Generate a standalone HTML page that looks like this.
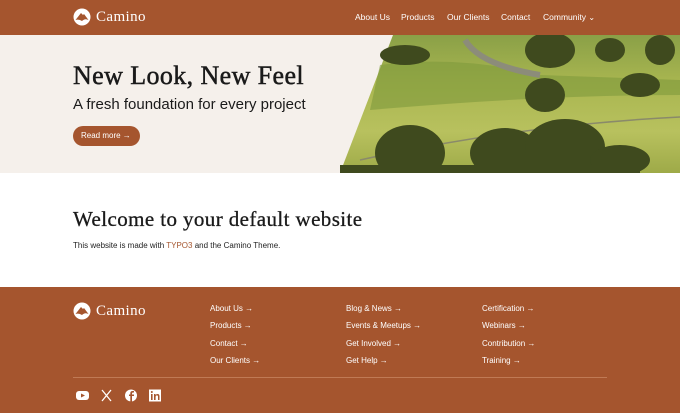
<!DOCTYPE html>
<html><head><meta charset="utf-8"><style>
*{margin:0;padding:0;box-sizing:border-box}
body{width:680px;height:413px;overflow:hidden;font-family:"Liberation Sans",sans-serif;background:#fff;position:relative}
.hdr{position:absolute;left:0;top:0;width:680px;height:35px;background:#a5552e;color:#fff}
.logo{position:absolute;display:flex;align-items:center;color:#fff;font-family:"Liberation Serif",serif;font-size:15px;letter-spacing:.4px}
.logo svg{margin-right:5px}
.nav{position:absolute;top:12px;font-size:8.5px;color:#fff}
.hero{position:absolute;top:35px;left:0;width:680px;height:138px;background:#f5f0eb;overflow:hidden}
h1{position:absolute;left:73px;top:61px;font-family:"Liberation Serif",serif;font-size:26px;font-weight:normal;color:#1a1a1a;letter-spacing:.4px;-webkit-text-stroke:.5px #1a1a1a}
.sub{position:absolute;left:73px;top:96px;font-size:15px;color:#1a1a1a}
.btn{position:absolute;left:73px;top:126px;width:67px;height:20px;border-radius:10px;background:#a5552e;color:#fff;font-size:8px;line-height:20px;padding-left:8px}
h2{position:absolute;left:73px;top:207px;font-family:"Liberation Serif",serif;font-size:21px;font-weight:normal;color:#1a1a1a;letter-spacing:.4px;-webkit-text-stroke:.3px #1a1a1a}
.p{position:absolute;left:73px;top:241px;font-size:8px;color:#222}
.ftr{position:absolute;left:0;top:287px;width:680px;height:126px;background:#a5552e;color:#fff}
.fl{position:absolute;font-size:8px;color:#fff}
.line{position:absolute;left:73px;top:377px;width:534px;height:1px;background:#c07a55}
</style></head><body>
<div class="hdr">
<div class="logo" style="left:73px;top:8px"><svg width="18" height="18" viewBox="0 0 18 18"><circle cx="9" cy="9" r="8.5" fill="#fff"/><path d="M2.5 12 L8 5 L10 7 L11 6 L15.5 12 Q12 10 9 13 Q6 11 2.5 12Z" fill="#a5552e"/></svg>Camino</div>
<div class="nav" style="left:355px">About Us</div>
<div class="nav" style="left:401px">Products</div>
<div class="nav" style="left:447px">Our Clients</div>
<div class="nav" style="left:501px">Contact</div>
<div class="nav" style="left:543px">Community <span style="font-size:8px">&#8964;</span></div>
</div>
<div class="hero">
<svg style="position:absolute;left:340px;top:0" width="340" height="138" viewBox="0 0 340 138">
<defs><linearGradient id="g" x1="0" y1="0" x2="0" y2="1"><stop offset="0" stop-color="#8aa047"/><stop offset=".35" stop-color="#a9b650"/><stop offset=".7" stop-color="#b8c15e"/><stop offset="1" stop-color="#9eaa48"/></linearGradient></defs>
<polygon points="53,0 340,0 340,138 0,138" fill="url(#g)"/>
<path d="M40 30 Q120 20 200 40 L340 45 L340 60 Q200 60 30 75Z" fill="#7e9a3c" opacity=".6"/>
<path d="M125 5 Q140 30 200 40" stroke="#8c8c7a" stroke-width="6" fill="none"/>
<path d="M20 125 Q180 90 340 82" stroke="#8a8a6a" stroke-width="1.5" fill="none"/>
<g fill="#3f4a1e"><ellipse cx="65" cy="20" rx="25" ry="10"/><ellipse cx="210" cy="15" rx="25" ry="18"/><ellipse cx="270" cy="15" rx="15" ry="12"/><ellipse cx="320" cy="15" rx="15" ry="15"/><ellipse cx="205" cy="60" rx="20" ry="17"/><ellipse cx="300" cy="50" rx="20" ry="12"/>
<ellipse cx="70" cy="118" rx="35" ry="28"/><ellipse cx="165" cy="118" rx="35" ry="25"/><ellipse cx="225" cy="112" rx="40" ry="28"/><ellipse cx="280" cy="125" rx="30" ry="15"/><rect x="0" y="130" width="300" height="8"/></g>
</svg>
</div>
<h1>New Look, New Feel</h1>
<div class="sub">A fresh foundation for every project</div>
<div class="btn">Read more →</div>
<h2>Welcome to your default website</h2>
<div class="p">This website is made with <span style="color:#a5552e">TYPO3</span> and the Camino Theme.</div>
<div class="ftr">
<div class="logo" style="left:73px;top:15px"><svg width="18" height="18" viewBox="0 0 18 18"><circle cx="9" cy="9" r="8.5" fill="#fff"/><path d="M2.5 12 L8 5 L10 7 L11 6 L15.5 12 Q12 10 9 13 Q6 11 2.5 12Z" fill="#a5552e"/></svg>Camino</div>
</div>
<div class="fl" style="left:210px;top:304px">About Us →</div>
<div class="fl" style="left:210px;top:321px">Products →</div>
<div class="fl" style="left:210px;top:339px">Contact →</div>
<div class="fl" style="left:210px;top:356px">Our Clients →</div>
<div class="fl" style="left:346px;top:304px">Blog &amp; News →</div>
<div class="fl" style="left:346px;top:321px">Events &amp; Meetups →</div>
<div class="fl" style="left:346px;top:339px">Get Involved →</div>
<div class="fl" style="left:346px;top:356px">Get Help →</div>
<div class="fl" style="left:482px;top:304px">Certification →</div>
<div class="fl" style="left:482px;top:321px">Webinars →</div>
<div class="fl" style="left:482px;top:339px">Contribution →</div>
<div class="fl" style="left:482px;top:356px">Training →</div>
<div class="line"></div>
<svg style="position:absolute;left:76px;top:389px" width="90" height="13" viewBox="0 0 90 13">
<rect x="0" y="2" width="13" height="9" rx="3" fill="#fff"/><path d="M5 4.5 L9 6.5 L5 8.5Z" fill="#a5552e"/>
<path d="M26 1 L35 12 M35 1 L26 12" stroke="#fff" stroke-width="1.3"/>
<circle cx="55" cy="6.5" r="6" fill="#fff"/><path d="M56 13 V7 H58 V5.5 H56 V4.5 Q56 3.5 57 3.5 H58 V2 H56.5 Q54.3 2 54.3 4.3 V5.5 H53 V7 H54.3 V13Z" fill="#a5552e"/>
<rect x="73" y="0.5" width="12" height="12" fill="#fff"/><rect x="75" y="5" width="1.6" height="6" fill="#a5552e"/><circle cx="75.8" cy="3" r="1" fill="#a5552e"/><path d="M78 11 V5 H79.5 V6 Q80.5 4.8 82 5 Q83.5 5.3 83.5 7.5 V11 H82 V7.8 Q82 6.3 80.8 6.4 Q79.6 6.5 79.6 7.8 V11Z" fill="#a5552e"/>
</svg>
</body></html>
